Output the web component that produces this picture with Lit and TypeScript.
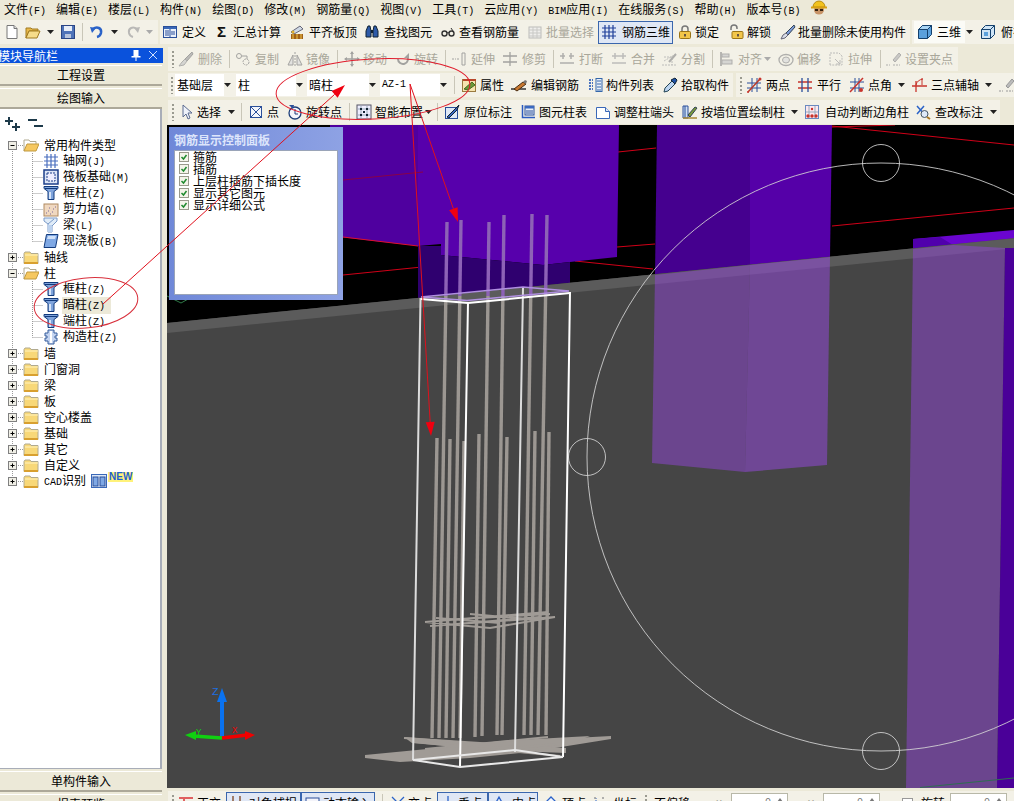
import { LitElement, html, css, svg, nothing } from "lit";
import { customElement } from "lit/decorators.js";

const R = "#c8342c", Y = "#f2c64a";
const I: Record<string, any> = {
  new: svg`<path d="M3 1.500h7l3 3v10H3z" fill="#fff" stroke="#777"/><path d="M10 1.500v3h3" fill="#ddd" stroke="#777"/>`,
  open: svg`<path d="M1 4h5l1 1h6v2H4l-3 7z" fill="#e8b84a" stroke="#a07a20"/><path d="M1 14l3-7h11l-3 7z" fill="#f6dc8a" stroke="#a07a20"/>`,
  save: svg`<rect x="1.500" y="1.500" width="13" height="13" fill="#4f73b8" stroke="#2a4585"/><rect x="4" y="2" width="8" height="5" fill="#e8eef8"/><rect x="5" y="10" width="6" height="4" fill="#b8c4dc"/>`,
  undo: svg`<path d="M4 5c4-3 9-1 8 4-.5 2-2 3.500-4 4" fill="none" stroke="#2a62c8" stroke-width="2.500"/><path d="M1 3l6 1-4 5z" fill="#2a62c8"/>`,
  redo: svg`<path d="M12 5C8 2 3 4 4 9c.5 2 2 3.500 4 4" fill="none" stroke="#9aa" stroke-width="2"/><path d="M15 3l-6 1 4 5z" fill="#9aa"/>`,
  def: svg`<rect x="1.500" y="2.500" width="13" height="11" fill="#eaf0fa" stroke="#2a4f9a"/><rect x="2" y="3" width="12" height="2" fill="#3a68b8"/><path d="M8 5v8M3 7h4M3 9h4M3 11h4M9 8h4M9 10h4" stroke="#2a4f9a"/>`,
  sigma: svg`<text x="2" y="13" font-size="15" font-weight="700" font-family="Liberation Sans" fill="#111">Σ</text>`,
  align: svg`<path d="M2 8l9-6 3 3-9 5z" fill="#cfd8e4" stroke="#667"/><rect x="2" y="10" width="12" height="5" fill="#a06018"/><path d="M4 10v5M8 10v5M12 10v5" stroke="${Y}"/><circle cx="4" cy="8" r="1.500" fill="#e0b030"/>`,
  binoc: svg`<path d="M2 7l2-5h2l1 5v6H2zM14 7l-2-5h-2L9 7v6h5z" fill="#2d5aa8" stroke="#123"/><rect x="7" y="6" width="2" height="3" fill="#123"/>`,
  glass: svg`<circle cx="4.500" cy="9.500" r="2.500" fill="none" stroke="#333" stroke-width="1.400"/><circle cx="11.500" cy="9.500" r="2.500" fill="none" stroke="#333" stroke-width="1.400"/><path d="M7 9q1-1 2 0M13 7l-2-3" stroke="#333" fill="none"/>`,
  batch: svg`<rect x="2" y="3" width="12" height="11" fill="#eee" stroke="#aaa"/><path d="M2 6h12M2 9h12M2 12h12M6 3v11M10 3v11" stroke="#bbb"/>`,
  grid3: svg`<path d="M1 4h14M1 8h14M1 12h14M4 1v14M8 1v14M12 1v14" stroke="#1f3f9a" stroke-width="1.200" fill="none"/>`,
  lock: svg`<path d="M5 8V5a3 3 0 016 0v3" fill="none" stroke="#777" stroke-width="1.500"/><rect x="2.500" y="7.500" width="11" height="7" rx="1" fill="${Y}" stroke="#9a7416"/><rect x="7" y="10" width="2" height="2.500" fill="#654"/>`,
  unlock: svg`<path d="M3 6V4a3 3 0 016 0v1" fill="none" stroke="#777" stroke-width="1.500"/><rect x="4" y="7.500" width="11" height="7" rx="1" fill="${Y}" stroke="#9a7416"/><rect x="9" y="10" width="2" height="2.500" fill="#654"/>`,
  brush: svg`<path d="M14 1L6 9l2 2 7-8z" fill="#7c9ad8" stroke="#345"/><path d="M6 9l2 2-3 3-4 1 2-4z" fill="#d8dce8" stroke="#667"/>`,
  cube: svg`<path d="M1.500 5.500l4-4h9v9l-4 4h-9z" fill="#5aa0dc" stroke="#14406c"/><path d="M1.500 5.500h9v9M10.500 5.500l4-4" fill="none" stroke="#14406c"/><path d="M1.500 5.500l4-4h9l-4 4z" fill="#a8d4f4" stroke="#14406c"/>`,
  cubet: svg`<path d="M1.500 5.500l4-4h9v9l-4 4h-9z" fill="#cfe4f6" stroke="#14406c"/><path d="M1.500 5.500h9v9M10.500 5.500l4-4" fill="none" stroke="#14406c"/><rect x="4" y="8" width="4" height="4" fill="#5aa0dc"/>`,
  del: svg`<path d="M14 1L7 8l2 2 6-7z" fill="#aaa" stroke="#888"/><path d="M7 8l2 2-3 4-5 1 3-4z" fill="#ccc" stroke="#999"/>`,
  copy: svg`<circle cx="4" cy="5" r="2.500" fill="none" stroke="#888"/><circle cx="11" cy="11" r="3" fill="none" stroke="#888" stroke-dasharray="2 1"/><path d="M7 5h5v3" stroke="#888" fill="none"/>`,
  mirror: svg`<path d="M8 1v14" stroke="#888" stroke-dasharray="2 1"/><path d="M6 4v10H1zM10 4v10h5z" fill="#ddd" stroke="#888"/>`,
  move: svg`<path d="M8 1v14M1 8h14" stroke="#888" stroke-width="1.500"/><path d="M8 0l-2 3h4zM8 16l-2-3h4zM0 8l3-2v4zM16 8l-3-2v4z" fill="#888"/>`,
  rotate: svg`<path d="M3 8a5 5 0 109-3" fill="none" stroke="#888" stroke-width="2"/><path d="M14 2v5H9z" fill="#888"/>`,
  extend: svg`<path d="M1 8h4M6 8h3" stroke="#888" stroke-dasharray="2 1"/><path d="M11 2h3v12h-3z" fill="none" stroke="#888"/>`,
  trim: svg`<path d="M8 1v14M1 5h14M1 11h14" stroke="#888" stroke-width="1.300"/>`,
  brk: svg`<path d="M1 5h5M10 5h5M1 12h14M4 2v6M12 2v6" stroke="#999" stroke-width="1.500"/>`,
  merge: svg`<path d="M1 5h14M1 12h14M4 2v6M12 2v6" stroke="#aaa" stroke-width="1.500"/>`,
  split: svg`<path d="M1 14h16M3 10l12-7M3 6h8v8" stroke="#aaa" stroke-dasharray="2 1" fill="none"/><path d="M8 11l7-8" stroke="#999" stroke-width="2"/>`,
  alignl: svg`<path d="M2 1v14" stroke="#888" stroke-width="1.500"/><rect x="3" y="3" width="7" height="3" fill="#ccc" stroke="#999"/><rect x="3" y="9" width="10" height="4" fill="#ccc" stroke="#999"/>`,
  offset: svg`<ellipse cx="8" cy="9" rx="7" ry="5.500" fill="none" stroke="#999" stroke-width="1.300"/><ellipse cx="8" cy="9" rx="3.500" ry="3" fill="#ddd" stroke="#999"/>`,
  stretch: svg`<path d="M2 14V2h9l3 3v9z" fill="none" stroke="#aaa" stroke-dasharray="2 1"/><path d="M7 8l5 5M12 9v4H8" stroke="#aaa" fill="none"/>`,
  grip: svg`<path d="M1 14h4M8 14h7" stroke="#999" stroke-dasharray="2 1"/><path d="M14 2L8 9l2 2 6-7z" fill="#bbb" stroke="#999"/>`,
  prop: svg`<rect x="1.500" y="2.500" width="13" height="12" fill="#f6e4b0" stroke="#9a7a40"/><path d="M3 12l8-7 3 3-7 5z" fill="#6a9a3a" stroke="#476a20"/><path d="M2 3h13" stroke="#b8462a" stroke-width="2"/>`,
  edit: svg`<path d="M0 12h15" stroke="#333" stroke-width="1.500"/><path d="M3 12l9-7 3 2-9 7z" fill="#c87830" stroke="#4a2c10"/><path d="M12 5l3 2 1-3-2-1z" fill="#777"/>`,
  list: svg`<rect x="9" y="1.500" width="6" height="13" fill="#e8eef8" stroke="#36a"/><path d="M10 4h4M10 7h4M10 10h4M10 13h4" stroke="#36a"/><path d="M2 3h4M2 6h4M2 9h4M2 12h4" stroke="#4a74c0" stroke-width="2" stroke-dasharray="2 1"/>`,
  picker: svg`<path d="M2 15l1-4 7-7 3 3-7 7z" fill="#bcd4f0" stroke="#245"/><path d="M9 3l4-2 2 2-2 4z" fill="#1f54a8" stroke="#123"/>`,
  two: svg`<path d="M1 6h14M1 11h14M6 1v14M11 1v14" stroke="#2a4f9a"/><path d="M2 15L14 2" stroke="#b83a2a" stroke-width="1.500"/><circle cx="2" cy="15" r="1" fill="${R}"/><circle cx="14" cy="2" r="1.500" fill="${R}"/>`,
  para: svg`<path d="M1 5h14M1 11h14" stroke="${R}" stroke-width="1.300"/><path d="M5 1v14M11 1v14" stroke="#2a4f9a" stroke-width="1.300"/>`,
  angle: svg`<path d="M1 5h14M1 11h14M6 1v14M10 1v14" stroke="#2a4f9a"/><path d="M1 15L14 1" stroke="${R}" stroke-width="1.500"/><circle cx="12" cy="13" r="2" fill="${R}"/>`,
  three: svg`<path d="M1 9h15M5 15V4" stroke="${R}" stroke-width="1.300"/><path d="M5 8q1-5 7-6" fill="none" stroke="${R}"/><path d="M11 1v7" stroke="${R}"/>`,
  cursor: svg`<path d="M5 1v12l3-3 2 5 2-1-2-5h4z" fill="#eef2fa" stroke="#5a6a90"/>`,
  pt: svg`<rect x="2.500" y="2.500" width="11" height="11" fill="#f4f6fc" stroke="#2a4f9a"/><path d="M3 3l10 10M13 3L3 13" stroke="#2a4f9a"/>`,
  rotpt: svg`<circle cx="8" cy="9" r="6" fill="#f4f6fc" stroke="#1f3f7a" stroke-width="1.300"/><path d="M8 5v5h3" stroke="#1f3f7a" fill="none"/><path d="M2 1h5l-1 4z" fill="#2a4f9a"/>`,
  smart: svg`<rect x="1" y="1" width="14" height="14" fill="#eef" stroke="#556"/><path d="M2 5h12M2 11h12M5 2v12M11 2v12" stroke="#9ab"/><path d="M4 4h2v2H4zM10 4h2v2h-2zM4 10h2v2H4zM10 10h2v2h-2zM7 7h2v2H7z" fill="#123"/>`,
  orig: svg`<rect x="1.500" y="3.500" width="12" height="11" fill="#dfe8f6" stroke="#2a4f9a"/><path d="M3 13l9-9 3-3-2 5-8 8z" fill="#3a68c0" stroke="#123"/>`,
  tbl: svg`<path d="M2.500 1v12.500H15" fill="none" stroke="#2a5ac0" stroke-width="1.500"/><rect x="5" y="2" width="9" height="9" fill="#e8eef8" stroke="#2a4f9a"/><rect x="5" y="2" width="9" height="2.500" fill="#3a68c0"/><path d="M6 7h7M6 9h7" stroke="#2a4f9a"/>`,
  adj: svg`<path d="M1.500 3.500h9l4 4v7h-13z" fill="#fff" stroke="#3a68b8"/><path d="M10.500 3.500v4h4" fill="#dfe8f6" stroke="#3a68b8"/>`,
  wall: svg`<path d="M1 2h5v12H1zM3 2v12" fill="#cfe0f4" stroke="#2a4f9a"/><path d="M1 14h14" stroke="#a83" stroke-width="1.500"/><path d="M6 11l7-8 2 1-7 9z" fill="#7a9a3a" stroke="#345"/>`,
  auto: svg`<rect x="1.500" y="1.500" width="13" height="13" fill="#fde8f0" stroke="#6a8ac0"/><path d="M5 2v12M11 2v12M2 8h12" stroke="#9ab"/><circle cx="4" cy="12" r="1.700" fill="${R}"/><circle cx="8" cy="12" r="1.700" fill="${R}"/><circle cx="12" cy="12" r="1.700" fill="${R}"/><circle cx="8" cy="5" r="1.200" fill="${R}"/>`,
  check: svg`<path d="M2 2l8 9M9 2L2 10" stroke="#2a62c8" stroke-width="1.500"/><circle cx="9.500" cy="10" r="3.500" fill="#dde9f8" stroke="#456"/><path d="M12 13l3 2" stroke="#a72" stroke-width="2"/>`,
  ortho: svg`<path d="M1 3h14M6 3v12" stroke="#e06060" stroke-width="2"/>`,
  snap: svg`<path d="M4 1v14M11 1v14M2 9h12" stroke="#8a5a3a" stroke-width="1.500"/>`,
  dyn: svg`<rect x="2" y="3" width="13" height="11" fill="#f4f4fa" stroke="#2a4f9a"/><path d="M2 7h13" stroke="#c04040"/>`,
  cross: svg`<path d="M2 2l12 12M14 2L2 14" stroke="#2a62c8" stroke-width="1.300"/>`,
  perp: svg`<path d="M8 1v14M2 14h12" stroke="#2a62c8" stroke-width="1.300"/>`,
  mid: svg`<path d="M8 2l6 11H2z" fill="none" stroke="#2a62c8" stroke-width="1.300"/>`,
  vertex: svg`<path d="M1 9l7-7 7 7v6H1z" fill="#f4f8ff" stroke="#2a62c8" stroke-width="1.300"/>`,
  coord: svg`<path d="M4 3v12M1 12h14" stroke="#2a62c8" stroke-dasharray="1 1"/><circle cx="3" cy="3" r="1" fill="#999"/><circle cx="11" cy="3" r="1" fill="#999"/>`,
  grid: svg`<path d="M1 4h14M1 8h14M1 12h14M4 1v14M8 1v14M12 1v14" stroke="#4a6fbe" stroke-width="1.200"/>`,
  raft: svg`<rect x="1" y="1" width="14" height="14" fill="#dde6f6" stroke="#1d3f8a" stroke-width="1.500"/><rect x="4" y="4" width="8" height="8" fill="#eef" stroke="#1d3f8a" stroke-dasharray="2 1"/>`,
  col: svg`<path d="M1 1.500h14v2l-4 3v8H5v-8l-4-3z" fill="#7fa4dc" stroke="#123a7c"/><path d="M2 3.500h12" stroke="#123a7c"/><rect x="6" y="7" width="2" height="7" fill="#d6e4f8"/>`,
  shear: svg`<rect x="1" y="3" width="14" height="12" fill="#f0d8c0" stroke="#b08a60"/><path d="M3 12h1M6 7h1M9 11h1M12 6h1M5 10h1M10 8h1M7 13h1" stroke="#7a6a9a"/>`,
  beam: svg`<path d="M1 1h13v3L9 9v6H5V7L1 4z" fill="#e0ecf8" stroke="#7a9ac8"/><path d="M5 7l6-5" stroke="#7a9ac8"/><rect x="5" y="8" width="4" height="7" fill="#bcd2ee"/>`,
  slab: svg`<path d="M3.500 1.500H15L12.500 14.500H1z" fill="#7fa8e4" stroke="#123a7c"/><path d="M5 3h8l-1 3H4z" fill="#cfe0f8"/>`,
  post: svg`<path d="M5 1h6v3h3v3h-2v2h2v3h-3v3H5v-3H2V9h2V7H2V4h3z" fill="#c4d4f0" stroke="#345c9c"/><path d="M8 2v12" stroke="#fff" stroke-width="2"/>`,
  folder: svg`<path d="M1 4.500l1-1.500h5l1 1.500h7v10H1z" fill="#f8d878" stroke="#b0aa90"/><path d="M2 6h13" stroke="#fff3c0"/><path d="M1 14h14" stroke="#d8a030" stroke-width="2"/>`,
  folderO: svg`<path d="M1 14V3h5l1 1.500h6V7" fill="#fff" stroke="#b0aa90"/><path d="M1 14l3-7h12l-3 7z" fill="#f6c860" stroke="#c09a40"/>`,
  book: svg`<rect x=".5" y="1.500" width="15" height="13" fill="#dce8f8" stroke="#3a68b8"/><rect x="2" y="4" width="5" height="9" fill="#7fa8e4" stroke="#2a4f9a"/><rect x="9" y="4" width="5" height="9" fill="#7fa8e4" stroke="#2a4f9a"/>`,
};
const ico = (n: string) => html`<svg class="ic" viewBox="0 0 16 16" width="16" height="16">${I[n]}</svg>`;
const txt = (s: string) => s.split(/([\x00-\x7f]+)/).filter(Boolean).map((p) => (/^[\x00-\x7f]/.test(p) ? html`<span class="l">${p}</span>` : p));

type Item = { t: string; x: number; icon?: string; lx?: number; label?: string; dis?: boolean; cls?: string; dx?: number };
const it = (x: number, icon: string | null, lx?: number, label?: string, o: Partial<Item> = {}): Item => ({ t: "i", x, icon: icon ?? undefined, lx, label, ...o });
const a = (x: number, dis = false): Item => ({ t: "a", x, dis });
const s = (x: number): Item => ({ t: "s", x });
const g = (x: number): Item => ({ t: "g", x });
const sp = (x: number): Item => ({ t: "p", x });
const c = (x: number, label: string): Item => ({ t: "c", x, label });
const lb = (x: number, label: string, cls = ""): Item => ({ t: "i", x, lx: x, label, cls });
const inp = (x: number): Item => ({ t: "n", x });
const D = { dis: true };
type Bar = { x0: number; x1: number; cls?: string; items: Item[] };

const row1: Bar[] = [
  { x0: 0, x1: 158, items: [it(4, "new"), it(25, "open"), a(47), it(60, "save"), s(82), it(89, "undo"), a(111), it(125, "redo", undefined, undefined, D), a(146, true)] },
  { x0: 160, x1: 910, items: [it(162, "def", 182, "定义"), it(215, "sigma", 233, "汇总计算"), it(289, "align", 309, "平齐板顶"), it(364, "binoc", 384, "查找图元"), it(440, "glass", 459, "查看钢筋量"), it(527, "batch", 546, "批量选择", D), it(598, "grid3", 622, "钢筋三维", { cls: "on", dx: 3 }), sp(673), it(677, "lock", 695, "锁定"), it(728, "unlock", 747, "解锁"), it(780, "brush", 798, "批量删除未使用构件")] },
  { x0: 912, x1: 1014, items: [it(914, "cube", 937, "三维", { cls: "w", dx: 3 }), sp(965), a(966), it(980, "cubet", 1001, "俯视")] },
];
const row2: Bar[] = [{ x0: 168, x1: 958, items: [g(172), it(178, "del", 198, "删除", D), s(229), it(235, "copy", 255, "复制", D), it(287, "mirror", 306, "镜像", D), s(337), it(344, "move", 363, "移动", D), it(395, "rotate", 414, "旋转", D), s(445), it(451, "extend", 471, "延伸", D), it(502, "trim", 522, "修剪", D), s(553), it(559, "brk", 579, "打断", D), it(611, "merge", 631, "合并", D), it(661, "split", 681, "分割", D), s(712), it(719, "alignl", 738, "对齐", D), a(764, true), it(778, "offset", 797, "偏移", D), it(828, "stretch", 848, "拉伸", D), s(880), it(885, "grip", 905, "设置夹点", D)] }];
const row3: Bar[] = [
  { x0: 168, x1: 733, items: [g(171), c(175, "基础层"), a(224), c(236, "柱"), a(296), c(307, "暗柱"), a(369), c(380, "AZ-1"), a(440), s(454), it(461, "prop", 480, "属性"), it(511, "edit", 531, "编辑钢筋"), it(587, "list", 606, "构件列表"), it(662, "picker", 681, "拾取构件")] },
  { x0: 736, x1: 1014, items: [g(740), it(746, "two", 766, "两点"), it(797, "para", 817, "平行"), it(849, "angle", 868, "点角"), a(898), it(911, "three", 931, "三点辅轴"), a(985), it(998, "grip")] },
];
const row4: Bar[] = [{ x0: 168, x1: 1000, items: [g(172), it(178, "cursor", 197, "选择"), a(228), s(241), it(248, "pt", 267, "点"), it(287, "rotpt", 306, "旋转点"), s(349), it(356, "smart", 375, "智能布置"), a(425), s(437), it(444, "orig", 464, "原位标注"), it(520, "tbl", 539, "图元柱表"), it(595, "adj", 614, "调整柱端头"), it(682, "wall", 701, "按墙位置绘制柱"), a(791), it(804, "auto", 825, "自动判断边角柱"), it(915, "check", 935, "查改标注"), a(990)] }];
const rowB: Bar[] = [{ x0: 168, x1: 1014, items: [g(172), it(178, "ortho", 197, "正交"), it(226, "snap", 249, "对象捕捉", { cls: "on", dx: 3 }), it(301, "dyn", 323, "动态输入", { cls: "on", dx: 3 }), sp(375), s(382), it(390, "cross", 408, "交点"), it(437, "perp", 458, "垂点", { cls: "on", dx: 3 }), it(488, "mid", 512, "中点", { cls: "on", dx: 3 }), sp(538), it(543, "vertex", 562, "顶点"), it(592, "coord", 613, "坐标"), g(645), lb(654, "不偏移"), a(700), lb(716, "X=", "dim"), inp(731), lb(790, "--", "dim"), lb(808, "Y=", "dim"), inp(823), lb(882, "--", "dim"), { t: "b", x: 902 }, lb(921, "旋转"), inp(950)] }];

const menus = ["文件(F)", "编辑(E)", "楼层(L)", "构件(N)", "绘图(D)", "修改(M)", "钢筋量(Q)", "视图(V)", "工具(T)", "云应用(Y)", "BIM应用(I)", "在线服务(S)", "帮助(H)", "版本号(B)"];

type Row = { lvl: number; label: string; icon?: string; open?: boolean; last?: boolean; sel?: boolean; end?: boolean };
const top = (label: string, open = false, end = false): Row => ({ lvl: 0, label, open, end });
const kid = (icon: string, label: string, last = false, sel = false): Row => ({ lvl: 1, icon, label, last, sel });
const tree: Row[] = [
  top("常用构件类型", true), kid("grid", "轴网(J)"), kid("raft", "筏板基础(M)"), kid("col", "框柱(Z)"), kid("shear", "剪力墙(Q)"), kid("beam", "梁(L)"), kid("slab", "现浇板(B)", true),
  top("轴线"), top("柱", true), kid("col", "框柱(Z)"), kid("col", "暗柱(Z)", false, true), kid("col", "端柱(Z)"), kid("post", "构造柱(Z)", true),
  top("墙"), top("门窗洞"), top("梁"), top("板"), top("空心楼盖"), top("基础"), top("其它"), top("自定义"), top("CAD识别", false, true),
];

// rebars: top x, top y, bottom x, bottom y
const bars: number[][] = [
  [447, 222, 439, 738], [461, 220, 453, 738], [489, 222, 482, 736], [504, 215, 497, 735], [532, 214, 524, 735], [547, 215, 538, 735],
  [437, 438, 432, 738], [450, 439, 446, 738], [464, 441, 460, 738], [479, 434, 475, 737], [507, 437, 502, 735], [535, 431, 531, 735], [549, 432, 546, 735],
];
const FLOOR = (x: number) => 323 - 0.1 * (x - 167);

@customElement("app-root")
export class AppRoot extends LitElement {
  static styles = css`
    :host { display: block; position: relative; width: 1014px; height: 801px; overflow: hidden; background: #ece9d8; font: 12px/14px "Noto Sans CJK SC", "Liberation Sans", sans-serif; color: #000; }
    .l { font-family: "Liberation Mono", monospace; font-size: 10px; }
    .menu { display: flex; height: 20px; box-sizing: border-box; padding: 2px 0 0 4px; }
    .menu div { flex: none; margin-right: 10px; white-space: nowrap; align-self: flex-start; }
    .hat { flex: none; margin-top: -3px; }
    .row { display: flex; height: 24px; }
    .main { display: flex; }
    .left { flex: none; width: 163px; height: 757px; margin-top: 4px; }
    .title { height: 15px; background: #0a52dc; color: #fff; display: flex; align-items: center; position: relative; overflow: hidden; }
    .title span { margin-left: -2px; }
    .title svg { position: absolute; top: 1px; }
    .pin { left: 130px; }
    .close { left: 147px; }
    .btn { height: 21px; margin: 2px 1px 0 0; display: flex; align-items: center; justify-content: center; background: #ece9d8; border-top: 1px solid #fff; border-bottom: 2px solid #aca899; box-sizing: border-box; }
    .panel { height: 660px; background: #fff; border-right: 2px solid #a8adb8; border-bottom: 1px solid #a8adb8; box-sizing: border-box; width: 162px; }
    .tools { height: 28px; display: flex; align-items: flex-start; }
    .tools svg { margin: 8px 0 0 4px; flex: none; }
    .tr { display: flex; align-items: center; height: 16px; white-space: nowrap; }
    .tr .gut { flex: none; }
    .tr .ic { flex: none; }
    .t0 .ic { margin-right: 5px; }
    .t1 .ic { margin-right: 4px; }
    .sel { background: #ece9d8; padding: 0 6px 0 1px; margin-left: -1px; }
    .t0 .book { margin: 0 0 0 5px; }
    .new { margin: -8px 0 0 1px; font: 700 10px/10px "Liberation Sans", sans-serif; color: #1c5fd0; background: #fff27a; padding: 0 1px; }
    .right { flex: none; width: 851px; }
    .r2 { margin-top: 3px; }
    .r3 { margin-top: 2px; }
    .r4 { margin-top: 3px; }
    .bar { display: flex; flex: none; align-items: center; height: 24px; background: #f3f1e7; white-space: nowrap; box-sizing: border-box; }
    .cell { flex: none; display: flex; align-items: center; height: 22px; box-sizing: border-box; }
    .cell .ic { flex: none; }
    .dis { color: #a9a79a; }
    .dis .ic { filter: grayscale(1); opacity: .75; }
    .on { background: #dfe7f5; box-shadow: inset 0 0 0 1px #3a66ad; height: 23px; }
    .w { background: #fbfbf6; }
    .dim { color: #9a9a90; }
    .arrow { width: 7px; height: 4px; flex: none; }
    .arrow path { fill: #222; }
    .dis .arrow path { fill: #aaa; }
    .sep { width: 1px; height: 18px; background: #c9c6b8; flex: none; }
    .grip { width: 2px; height: 17px; flex: none; background: repeating-linear-gradient(#9a9a90 0 2px, transparent 2px 4px); }
    .combo { background: #fff; padding-left: 2px; height: 22px; }
    .num { width: 57px; height: 20px; background: #fff; border: 1px solid #b8b8a8; box-sizing: border-box; display: flex; align-items: center; justify-content: flex-end; gap: 6px; padding-right: 4px; flex: none; color: #777; position: relative; }
    .up { width: 0; height: 0; border: 3px solid transparent; border-top: 0; border-bottom: 4px solid #777; align-self: flex-start; margin-top: 4px; }
    .cb { width: 11px; height: 11px; border: 1px solid #999; background: #fff; box-sizing: border-box; flex: none; }
    .canvas { position: relative; width: 847px; height: 663px; margin: 1px 0 0 4px; }
    .canvas > svg { display: block; }
    .ctl { position: absolute; left: 2px; top: 2px; width: 174px; height: 173px; box-sizing: border-box; padding: 5px; background: linear-gradient(90deg, #6f88d8, #8ea2e4); }
    .ctl h4 { margin: 0 0 3px 0; height: 15px; font: 700 12px/15px "Noto Sans CJK SC", sans-serif; color: #dde5fb; }
    .ctl .body { height: 145px; background: #fff; border: 1px solid #9aa4b8; box-sizing: border-box; padding: 0 0 0 4px; }
    .opt { display: flex; align-items: center; height: 12px; line-height: 12px; white-space: nowrap; }
    .opt svg { margin-right: 4px; flex: none; }
    .overlay { position: absolute; left: 0; top: 0; pointer-events: none; }
  `;

  private cell(i: Item, next: number) {
    const w = next - i.x;
    if (i.t === "a") return html`<div class="cell ${i.dis ? "dis" : ""}" style="width:${w}px"><svg class="arrow" viewBox="0 0 7 4"><path d="M0 0h7L3.500 4z"></path></svg></div>`;
    if (i.t === "s") return html`<div class="cell" style="width:${w}px"><div class="sep"></div></div>`;
    if (i.t === "g") return html`<div class="cell" style="width:${w}px"><div class="grip"></div></div>`;
    if (i.t === "p") return html`<div class="cell" style="width:${w}px"></div>`;
    if (i.t === "c") return html`<div class="cell combo" style="width:${w}px">${txt(i.label!)}</div>`;
    if (i.t === "n") return html`<div class="cell" style="width:${w}px"><div class="num"><span class="l">0</span><span class="up"></span></div></div>`;
    if (i.t === "b") return html`<div class="cell" style="width:${w}px"><div class="cb"></div></div>`;
    const dx = i.dx ?? 0;
    const lm = i.lx !== undefined ? i.lx - i.x - (i.icon ? 16 + dx : 0) : 0;
    return html`<div class="cell ${i.dis ? "dis" : ""} ${i.cls ?? ""}" style="width:${w}px">
      ${i.icon ? html`<svg class="ic" viewBox="0 0 16 16" width="16" height="16" style="margin-left:${dx}px">${I[i.icon]}</svg>` : nothing}
      ${i.label ? html`<span style="margin-left:${lm}px">${txt(i.label)}</span>` : nothing}
    </div>`;
  }

  private bars(list: Bar[], origin: number) {
    let prev = origin;
    return list.map((b) => {
      const ml = b.x0 - prev;
      prev = b.x1;
      const lead = b.items[0].x - b.x0;
      return html`<div class="bar" style="margin-left:${ml}px;width:${b.x1 - b.x0}px;padding-left:${lead}px">
        ${b.items.map((i, n) => this.cell(i, n + 1 < b.items.length ? b.items[n + 1].x : b.x1))}
      </div>`;
    });
  }

  private gutter(r: Row, idx: number) {
    const dots = "stroke:#9a9a9a;stroke-dasharray:1 1";
    if (r.lvl === 1) {
      return html`<svg class="gut" width="43" height="16" viewBox="0 0 43 16">
        <path d="M12.500 0v16" style=${dots}></path>
        <path d=${r.last ? "M32.500 0v8.500" : "M32.500 0v16"} style=${dots}></path>
        <path d="M32.500 8.500H43" style=${dots}></path>
      </svg>`;
    }
    return html`<svg class="gut" width="23" height="16" viewBox="0 0 23 16">
      <path d=${idx === 0 ? "M12.500 8v8" : r.end ? "M12.500 0v8" : "M12.500 0v16"} style=${dots}></path>
      <path d="M16 8.500h7" style=${dots}></path>
      <rect x="8.500" y="4.500" width="8" height="8" fill="#f0efe6" stroke="#808080"></rect>
      <path d=${r.open ? "M10.500 8.500h4" : "M10.500 8.500h4M12.500 6.500v4"} stroke="#000"></path>
    </svg>`;
  }

  private scene() {
    const rebar = bars.map(([x0, y0, x1, y1]) => {
      const xAt = (y: number) => x0 + ((x1 - x0) * (y - y0)) / (y1 - y0);
      if (y0 < 296) {
        return svg`<line x1=${x0} y1=${y0} x2=${xAt(296)} y2="296" stroke="#8d62b6" stroke-width="3.400"></line>
          <line x1=${xAt(296)} y1="296" x2=${x1} y2=${y1} stroke="#9c9792" stroke-width="3.400"></line>`;
      }
      return svg`<line x1=${x0} y1=${y0} x2=${x1} y2=${y1} stroke="#9c9792" stroke-width="3.400"></line>`;
    });
    const f = FLOOR;
    return html`<svg width="847" height="663" viewBox="167 125 847 663">
      <rect x="167" y="125" width="847" height="663" fill="#000"></rect>
      <g fill="none" stroke="#d00018" stroke-width="1">
        <path d="M832 126L1014 145M832 127L895 125M832 226L1014 208M618 152L656 148M617 247L655 244M575 261L653 269M343 275L422 267"></path>
      </g>
      <polygon points="330,125 418,125 418,246 330,236" fill="#4f009f"></polygon>
      <polygon points="418,125 619,125 617,257 570,262 543,265 441,255 441,244 418,246" fill="#5700ac"></polygon>
      <polygon points="418,246 441,246 441,255 543,265 570,262 570,283 418,298" fill="#2f006f"></polygon>
      <path d="M343 180L423 172" stroke="#8a0048" fill="none"></path>
      <path d="M343 237L418 246" stroke="#e0102a" fill="none"></path>
      <polygon points="657,125 750,125 750,266 655,275" fill="#45008f"></polygon>
      <polygon points="750,125 832,125 830,258 750,266" fill="#5500a8"></polygon>
      <polygon points="913,239 1014,230 1014,248 1005,248 953,245 913,249" fill="#6a05d0"></polygon>
      <polygon points="913,239 940,237 953,245 913,249" fill="#5000ac"></polygon>
      <polygon points="167,${f(167)} 1014,${f(1014)} 1014,788 167,788" fill="#454545"></polygon>
      <polygon points="167,${f(167)} 1014,${f(1014)} 1014,${f(1014) + 10} 167,${f(167) + 10}" fill="#5b5b5b"></polygon>
      <polygon points="655,275 750,265 745,472 652,463" fill="#9145d8" fill-opacity=".5"></polygon>
      <polygon points="750,265 830,257 827,465 745,472" fill="#9a4ae6" fill-opacity=".5"></polygon>
      <polygon points="913,249 953,245 1005,248 997,788 906,788" fill="#9145d8" fill-opacity=".5"></polygon>
      <polygon points="1005,248 1014,248 1014,788 997,788" fill="#4a0098"></polygon>
      <path d="M920 787.500L1014 778" stroke="#2f6e50" fill="none"></path>
      <path d="M167 296L181 303L190 298" stroke="#2f7a48" fill="none"></path>
      <g fill="none" stroke="#d6d6d6" stroke-width="1" stroke-opacity=".85">
        <circle cx="881" cy="457" r="294"></circle>
        <circle cx="881" cy="163" r="18.500"></circle>
        <circle cx="881" cy="751" r="18.500"></circle>
        <circle cx="587" cy="457" r="18.500"></circle>
      </g>
      ${rebar}
      <g fill="#a09b96">
        <polygon points="365,755 500,742 611,736 611,739 530,752 470,758 400,762 365,758"></polygon>
        <polygon points="404,737 480,742 566,748 566,753 490,750 412,743"></polygon>
        <polygon points="428,750 500,741 590,736 570,744 500,751 440,757"></polygon>
      </g>
      <g fill="none" stroke="#a09b96" stroke-width="2">
        <path d="M404 738L565 751M415 742L560 756M425 749L548 737M432 756L555 744"></path>
        <path d="M425 622L548 612M430 626L555 617M425 622L490 628L555 617M436 618L500 623M470 614L540 620M440 620L550 614M445 625L540 617"></path>
      </g>
      <g fill="none" stroke-width="2">
        <path d="M420.500 298L413 760M523 288L515 752" stroke="#dcdcdc"></path>
        <path d="M468 302L460 767M570 292L563 757" stroke="#fff"></path>
        <path d="M413 760L460 767L563 757L515 750L413 760" stroke="#e8e8e8"></path>
        <path d="M421 299L468 303L570 293" stroke="#fff"></path>
      </g>
      <path d="M421 297L467 300.500L569 291M421 297L523 287L569 291" stroke="#b08fe0" stroke-width="1.500" fill="none"></path>
      <path d="M222 738V700" stroke="#0a72f0" stroke-width="4"></path>
      <polygon points="222,688 227,702 217,702" fill="#0a72f0"></polygon>
      <text x="212" y="695" font-size="11" font-family="Liberation Mono" fill="#1d6fe0">Z</text>
      <path d="M222 738L193 736" stroke="#10d010" stroke-width="3.500"></path>
      <polygon points="185,735 196,731 196,740" fill="#10d010"></polygon>
      <text x="196" y="735" font-size="9" font-family="Liberation Mono" fill="#10d010">Y</text>
      <path d="M222 738L247 735" stroke="#f00000" stroke-width="3.500"></path>
      <polygon points="255,735 245,731 245,740" fill="#f00000"></polygon>
      <text x="232" y="733" font-size="9" font-family="Liberation Mono" fill="#f00000">X</text>
    </svg>`;
  }

  render() {
    const arrow = (x0: number, y0: number, x1: number, y1: number) => {
      const ang = Math.atan2(y1 - y0, x1 - x0), L = 14, W = 4.5;
      const bx = x1 - L * Math.cos(ang), by = y1 - L * Math.sin(ang);
      const nx = -Math.sin(ang) * W, ny = Math.cos(ang) * W;
      return svg`<line x1=${x0} y1=${y0} x2=${bx} y2=${by} stroke="#e0101c" stroke-width="1"></line>
        <polygon points="${x1},${y1} ${bx + nx},${by + ny} ${bx - nx},${by - ny}" fill="#f00010"></polygon>`;
    };
    return html`
      <div class="menu">
        ${menus.map((m) => html`<div>${txt(m)}</div>`)}
        <svg class="hat" width="18" height="17" viewBox="0 0 18 17">
          <ellipse cx="9" cy="11" rx="5" ry="4.500" fill="#c89468"></ellipse>
          <path d="M3 8a6 6 0 0112 0z" fill="#f2c21c" stroke="#b88c10"></path>
          <path d="M1 8.500h16" stroke="#d8a010" stroke-width="2"></path>
          <path d="M5 11h3M10 11h3" stroke="#321" stroke-width="2"></path>
        </svg>
      </div>
      <div class="row">${this.bars(row1, 0)}</div>
      <div class="main">
        <div class="left">
          <div class="title"><span>模块导航栏</span>
            <svg class="pin" width="12" height="13" viewBox="0 0 12 13"><path d="M3.500 1h5v6h2v1.500H6.500V12H5.500V8.500h-4V7h2z" fill="#fff"></path></svg>
            <svg class="close" width="12" height="13" viewBox="0 0 12 13"><path d="M2 2l8 8M10 2l-8 8" stroke="#cfe0ff" fill="none"></path></svg>
          </div>
          <div class="btn">工程设置</div>
          <div class="btn">绘图输入</div>
          <div class="panel">
            <div class="tools">
              <svg width="18" height="14" viewBox="0 0 18 14"><path d="M5 0v8M1 4h8M12 6v8M8 10h8" stroke="#1d3a4a" stroke-width="2"></path></svg>
              <svg width="16" height="12" viewBox="0 0 16 12" style="margin-left:6px"><path d="M0 3h9M6 9h9" stroke="#1d3a4a" stroke-width="2"></path></svg>
            </div>
            ${tree.map((r, i) => html`<div class="tr ${r.lvl ? "t1" : "t0"}">
              ${this.gutter(r, i)}
              ${ico(r.lvl ? r.icon! : r.open ? "folderO" : "folder")}
              <span class=${r.sel ? "sel" : ""}>${txt(r.label)}</span>
              ${r.label === "CAD识别" ? html`<svg class="ic book" viewBox="0 0 16 16" width="16" height="16">${I.book}</svg><span class="new">NEW</span>` : nothing}
            </div>`)}
          </div>
          <div class="btn">单构件输入</div>
          <div class="btn">报表预览</div>
        </div>
        <div class="right">
          <div class="row r2">${this.bars(row2, 163)}</div>
          <div class="row r3">${this.bars(row3, 163)}</div>
          <div class="row r4">${this.bars(row4, 163)}</div>
          <div class="canvas">
            ${this.scene()}
            <div class="ctl">
              <h4>钢筋显示控制面板</h4>
              <div class="body">
                ${["箍筋", "插筋", "上层柱插筋下插长度", "显示其它图元", "显示详细公式"].map((o) => html`<div class="opt">
                  <svg width="10" height="10" viewBox="0 0 10 10"><rect x=".5" y=".5" width="9" height="9" fill="#f4f4ea" stroke="#9a9a8c"></rect><path d="M2.500 5l2 2 3-4" fill="none" stroke="#1f8a2e" stroke-width="1.500"></path></svg>${o}</div>`)}
              </div>
            </div>
          </div>
          <div class="row r2">${this.bars(rowB, 163)}</div>
        </div>
      </div>
      <svg class="overlay" width="1014" height="801" viewBox="0 0 1014 801">
        <ellipse cx="373" cy="89" rx="97" ry="30" transform="rotate(-3 373 89)" fill="none" stroke="#e01c2c"></ellipse>
        <ellipse cx="86" cy="303" rx="52" ry="25" transform="rotate(-6 86 303)" fill="none" stroke="#d8303c"></ellipse>
        ${arrow(103, 304, 345, 85)}
        ${arrow(410, 84, 458, 222)}
        ${arrow(410, 84, 431, 436)}
      </svg>
    `;
  }
}
